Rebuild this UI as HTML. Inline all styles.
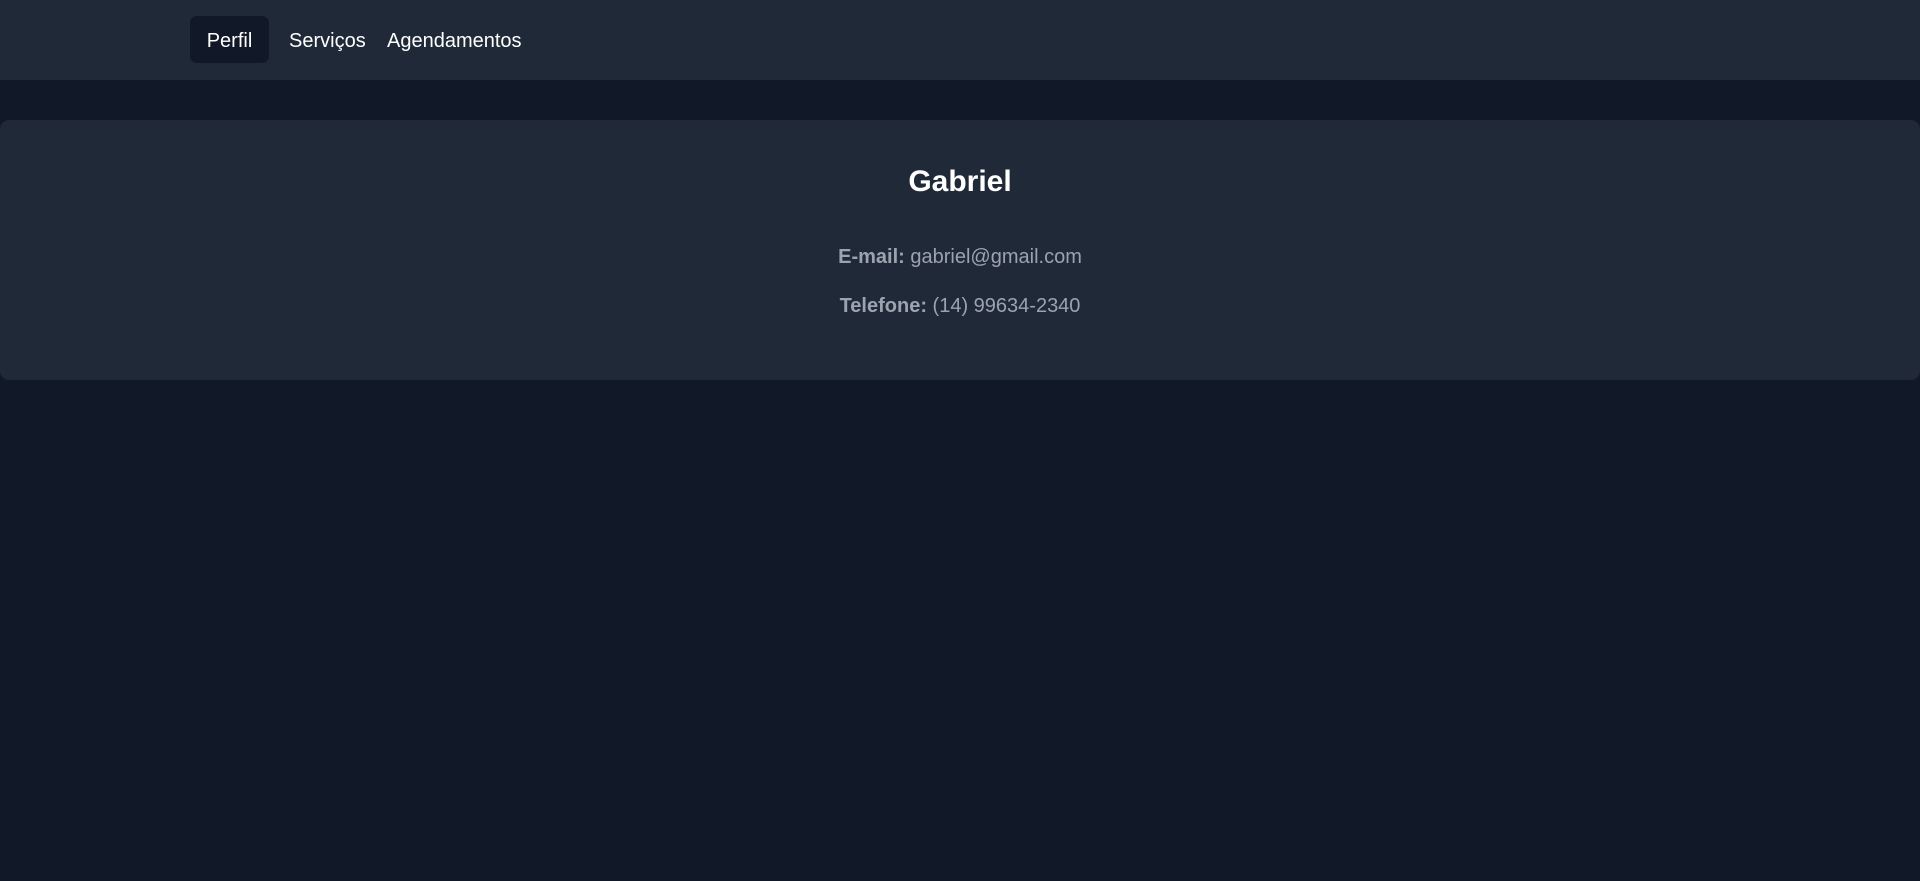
<!DOCTYPE html>
<html><head><meta charset="utf-8"><style>
*{margin:0;padding:0;box-sizing:border-box}
body{width:1920px;height:881px;background:#111827;font-family:"Liberation Sans",sans-serif;overflow:hidden;position:relative}
nav{position:absolute;left:0;top:0;width:1920px;height:80px;background:#1f2937}
.btn{position:absolute;top:16px;height:47px;line-height:51px;color:#fff;font-size:20px}
.p{left:190px;width:79px;background:#111827;border-radius:7px;text-align:center}
.card{position:absolute;left:0;top:120px;width:1920px;height:260px;background:#1f2937;border-radius:9px}
h1{position:absolute;left:0;top:162px;width:100%;text-align:center;font-size:30px;color:#fff;line-height:40px;font-weight:bold}
.l{position:absolute;left:0;width:100%;text-align:center;font-size:20px;color:#9ca3af;line-height:24px}
</style></head><body>
<nav>
<div class="btn p">Perfil</div>
<div class="btn" style="left:289px">Serviços</div>
<div class="btn" style="left:387px">Agendamentos</div>
</nav>
<div class="card"></div>
<h1>Gabriel</h1>
<div class="l" style="top:245px"><b>E-mail:</b> gabriel@gmail.com</div>
<div class="l" style="top:294px"><b>Telefone:</b> (14) 99634-2340</div>
</body></html>
